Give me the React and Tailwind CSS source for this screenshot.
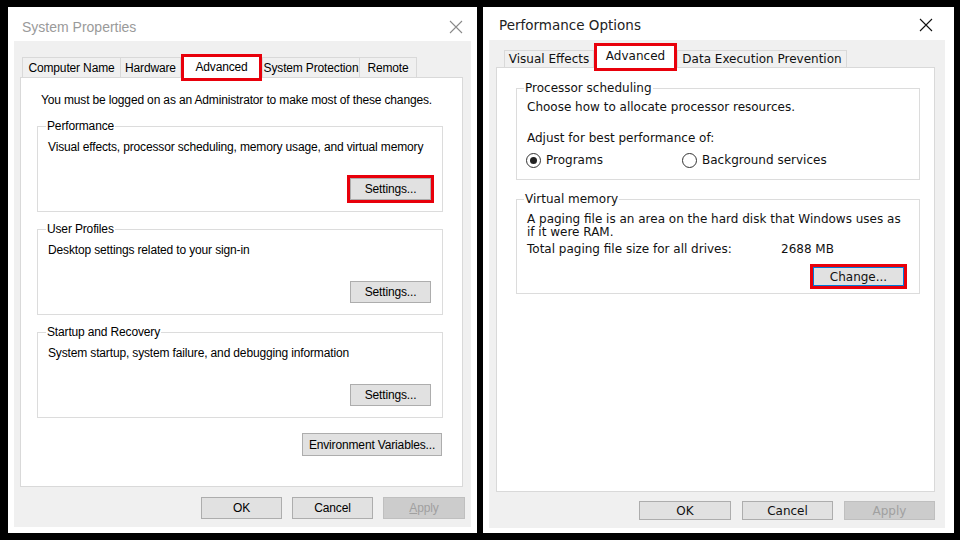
import { useState } from 'react';

// Two Windows 10 dialogs side by side: System Properties + Performance Options

const CloseIcon = ({ color }) => (
  <svg width="14" height="14" viewBox="0 0 14 14">
    <path d="M1 1 L13 13 M13 1 L1 13" stroke={color} strokeWidth="1.1" fill="none" />
  </svg>
);

// Tab header: normal tabs sit low, the selected one is wrapped in the red marker
const Tab = ({ label, width, selected, tall }) =>
  selected ? (
    <div
      className={`relative z-10 flex items-start justify-center border-[3px] border-[#e8000b] bg-white mb-[-4px] ${tall}`}
      style={{ width }}
    >
      <span className="mt-[1px]">{label}</span>
    </div>
  ) : (
    <div
      className="flex items-center justify-center border border-b-0 border-[#d9d9d9] bg-[#f0f0f0] -ml-[1px] first:ml-0 overflow-hidden whitespace-nowrap"
      style={{ width }}
    >
      {label}
    </div>
  );

const Btn = ({ children, w, h, disabled, focus }) => (
  <div
    className={`flex items-center justify-center border whitespace-nowrap ${
      disabled
        ? 'bg-[#cccccc] border-[#bfbfbf] text-[#a0a0a0]'
        : focus
        ? 'bg-[#e1e1e1] border-[#0078d7]'
        : 'bg-[#e1e1e1] border-[#adadad]'
    }`}
    style={{ width: w, height: h }}
  >
    {children}
  </div>
);

// red highlight wrapper (transparent when not marked)
const Mark = ({ on, children }) => (
  <div className={`border-[3px] ${on ? 'border-[#e8000b]' : 'border-transparent'}`}>{children}</div>
);

const Group = ({ title, desc, marked }) => (
  <fieldset className="border border-[#dcdcdc] pl-[10px] pr-[8px] pb-[8px]">
    <legend className="ml-[-2px] px-[1px] leading-[16px]">{title}</legend>
    <div className="mt-[5px] leading-[16px] whitespace-nowrap">{desc}</div>
    <div className="flex justify-end mt-[20px]">
      <Mark on={marked}>
        <Btn w={81} h={22}>Settings...</Btn>
      </Mark>
    </div>
  </fieldset>
);

const SystemProperties = () => (
  <div className="w-[469px] h-[526px] bg-white flex flex-col text-[12px] tracking-[-0.15px] text-black font-['Liberation_Sans',sans-serif]">
    <div className="h-[38px] flex items-center justify-between pl-[14px] pr-[14px] pt-[6px]">
      <span className="text-[14px] tracking-normal text-[#9a9a9a]">System Properties</span>
      <CloseIcon color="#8a8a8a" />
    </div>
    <div className="flex-1 mx-[6px] mb-[6px] bg-[#f0f0f0] flex flex-col pl-[6px] pr-[8px] pt-[9px] pb-[8px]">
      <div className="flex items-end h-[27px] pl-[2px]">
        <div className="flex h-[20px]">
          <Tab label="Computer Name" width={99} />
          <Tab label="Hardware" width={61} />
        </div>
        <Tab label="Advanced" width={81} selected tall="h-[27px]" />
        <div className="flex h-[20px]">
          <Tab label="System Protection" width={98} />
          <Tab label="Remote" width={58} />
        </div>
      </div>
      <div className="h-[410px] bg-white border border-[#d9d9d9] pt-[14px] pl-[16px] pr-[19px]">
        <div className="leading-[16px] pl-[4px] whitespace-nowrap">
          You must be logged on as an Administrator to make most of these changes.
        </div>
        <div className="mt-[10px] flex flex-col gap-[9px]">
          <Group
            title="Performance"
            desc="Visual effects, processor scheduling, memory usage, and virtual memory"
            marked
          />
          <Group title="User Profiles" desc="Desktop settings related to your sign-in" />
          <Group
            title="Startup and Recovery"
            desc="System startup, system failure, and debugging information"
          />
        </div>
        <div className="flex justify-end mt-[15px] pr-[1px]">
          <Btn w={140} h={23}>Environment Variables...</Btn>
        </div>
      </div>
      <div className="flex justify-end gap-[10px] mt-[10px] mr-[-2px]">
        <Btn w={81} h={22}>OK</Btn>
        <Btn w={81} h={22}>Cancel</Btn>
        <Btn w={82} h={22} disabled>
          <span>
            <span className="underline">A</span>pply
          </span>
        </Btn>
      </div>
    </div>
  </div>
);

const Radio = ({ checked, label }) => (
  <div className="flex items-center gap-[5px]">
    <div className="w-[15px] h-[15px] rounded-full border border-[#333] bg-white flex items-center justify-center">
      {checked && <div className="w-[7px] h-[7px] rounded-full bg-[#222]" />}
    </div>
    <span>{label}</span>
  </div>
);

const PerformanceOptions = () => {
  const [mode] = useState('programs');
  return (
    <div className="w-[471px] h-[526px] bg-white flex flex-col text-[12px] text-[#111] font-['DejaVu_Sans',sans-serif]">
      <div className="h-[33px] flex items-center justify-between pl-[16px] pr-[21px] pt-[3px]">
        <span className="text-[13.5px] text-[#222]">Performance Options</span>
        <CloseIcon color="#111" />
      </div>
      <div className="flex-1 ml-[6px] mr-[9px] mb-[5px] bg-[#f0f0f0] flex flex-col pl-[7px] pr-[10px] pt-[3px] pb-[8px]">
        <div className="flex items-end h-[24px] pl-[8px]">
          <div className="flex h-[17px]">
            <Tab label="Visual Effects" width={90} />
          </div>
          <Tab label="Advanced" width={83} selected tall="h-[28px]" />
          <div className="flex h-[17px]">
            <Tab label="Data Execution Prevention" width={170} />
          </div>
        </div>
        <div className="h-[425px] bg-white border border-[#d9d9d9] pt-[12px] pl-[19px] pr-[14px]">
          <fieldset className="border border-[#dcdcdc] pl-[9px] pb-[12px]">
            <legend className="ml-[-2px] px-[1px] leading-[16px]">Processor scheduling</legend>
            <div className="mt-[4px] leading-[14px] pl-[1px]">Choose how to allocate processor resources.</div>
            <div className="mt-[17px] leading-[14px] pl-[1px]">Adjust for best performance of:</div>
            <div className="mt-[8px] flex h-[14px] items-center">
              <div className="w-[156px]">
                <Radio checked={mode === 'programs'} label="Programs" />
              </div>
              <Radio checked={mode === 'background'} label="Background services" />
            </div>
          </fieldset>
          <fieldset className="mt-[11px] border border-[#dcdcdc] pl-[9px] pr-[12px] pb-[4px]">
            <legend className="ml-[-2px] px-[1px] leading-[16px]">Virtual memory</legend>
            <div className="mt-[6px] leading-[13px] pl-[1px] whitespace-nowrap">
              A paging file is an area on the hard disk that Windows uses as
              <br />
              if it were RAM.
            </div>
            <div className="mt-[3px] leading-[14px] pl-[1px] flex">
              <span className="w-[254px]">Total paging file size for all drives:</span>
              <span>2688 MB</span>
            </div>
            <div className="flex justify-end mt-[8px]">
              <Mark on>
                <Btn w={91} h={19} focus>
                  Change...
                </Btn>
              </Mark>
            </div>
          </fieldset>
        </div>
        <div className="flex justify-end gap-[11px] mt-[9px]">
          <Btn w={92} h={19}>OK</Btn>
          <Btn w={91} h={19}>Cancel</Btn>
          <Btn w={91} h={19} disabled>Apply</Btn>
        </div>
      </div>
    </div>
  );
};

export default function App() {
  return (
    <div className="w-[960px] h-[540px] bg-black flex gap-[6px] pl-[8px] pt-[7px]">
      <SystemProperties />
      <PerformanceOptions />
    </div>
  );
}
